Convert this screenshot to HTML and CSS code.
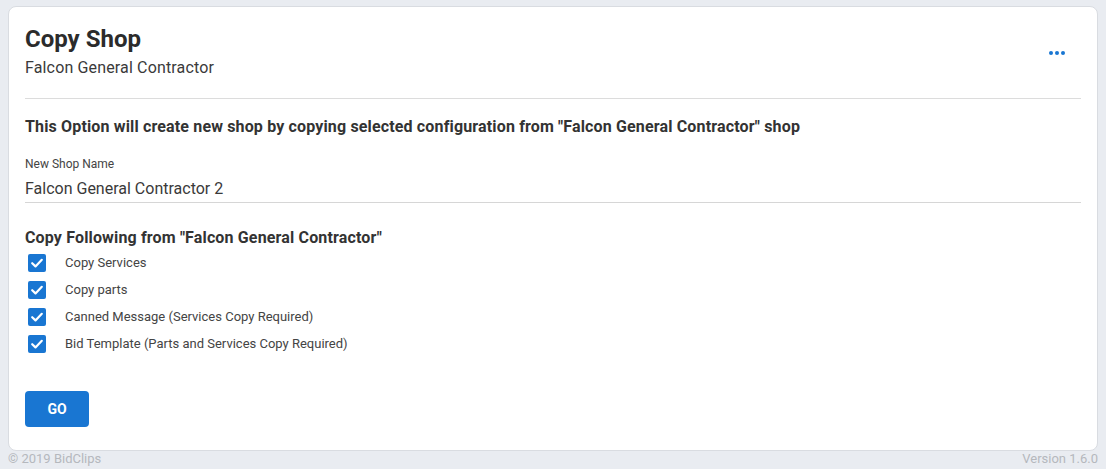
FILE: index.html
```html
<!DOCTYPE html>
<html>
<head>
<meta charset="utf-8">
<link rel="stylesheet" href="styles.css">
</head>
<body>
<div class="page">
  <div class="card">
    <div class="header">
      <div class="titles">
        <h1 class="title">Copy Shop</h1>
        <div class="subtitle">Falcon General Contractor</div>
      </div>
      <div class="more" aria-label="more">
        <span class="dot"></span><span class="dot"></span><span class="dot"></span>
      </div>
    </div>
    <div class="divider"></div>
    <p class="intro">This Option will create new shop by copying selected configuration from "Falcon General Contractor" shop</p>
    <div class="field">
      <label class="field-label">New Shop Name</label>
      <div class="field-value">Falcon General Contractor 2</div>
    </div>
    <h2 class="section">Copy Following from "Falcon General Contractor"</h2>
    <ul class="checks">
      <li class="check"><span class="box"><svg viewBox="0 0 18 18" width="18" height="18"><path d="M4.2 9.2 L7.5 12.4 L13.8 5.8" fill="none" stroke="#fff" stroke-width="2.2" stroke-linecap="round" stroke-linejoin="round"/></svg></span><span class="check-label">Copy Services</span></li>
      <li class="check"><span class="box"><svg viewBox="0 0 18 18" width="18" height="18"><path d="M4.2 9.2 L7.5 12.4 L13.8 5.8" fill="none" stroke="#fff" stroke-width="2.2" stroke-linecap="round" stroke-linejoin="round"/></svg></span><span class="check-label">Copy parts</span></li>
      <li class="check"><span class="box"><svg viewBox="0 0 18 18" width="18" height="18"><path d="M4.2 9.2 L7.5 12.4 L13.8 5.8" fill="none" stroke="#fff" stroke-width="2.2" stroke-linecap="round" stroke-linejoin="round"/></svg></span><span class="check-label">Canned Message (Services Copy Required)</span></li>
      <li class="check"><span class="box"><svg viewBox="0 0 18 18" width="18" height="18"><path d="M4.2 9.2 L7.5 12.4 L13.8 5.8" fill="none" stroke="#fff" stroke-width="2.2" stroke-linecap="round" stroke-linejoin="round"/></svg></span><span class="check-label">Bid Template (Parts and Services Copy Required)</span></li>
    </ul>
    <button class="go">GO</button>
  </div>
  <div class="footer">
    <span>© 2019 BidClips</span>
    <span>Version 1.6.0</span>
  </div>
</div>
</body>
</html>
```
FILE: styles.css
```css
* { box-sizing: border-box; }
html, body { margin: 0; padding: 0; }
body {
  background: #e9ecf1;
  font-family: Roboto, "Liberation Sans", Arial, sans-serif;
  color: #333;
}
.page {
  padding: 6px 8px 0 8px;
  width: 1106px;
  height: 469px;
}
.card {
  background: #fff;
  border: 1px solid #d9dce1;
  border-radius: 8px;
  height: 445px;
  padding: 18px 16px 0 16px;
}
.header {
  display: flex;
  justify-content: space-between;
  align-items: flex-start;
}
.title {
  margin: 0;
  font-size: 24px;
  font-weight: 700;
  line-height: 28px;
  color: #2b2b2b;
}
.subtitle {
  margin-top: 5px;
  font-size: 16px;
  line-height: 20px;
  letter-spacing: 0.15px;
  color: #3a3a3a;
}
.more {
  display: flex;
  gap: 2px;
  margin-top: 26px;
  margin-right: 16px;
}
.dot {
  width: 4px;
  height: 4px;
  border-radius: 50%;
  background: #1976d2;
}
.divider {
  height: 1px;
  background: #dcdcdc;
  margin-top: 20px;
}
.intro {
  margin: 18px 0 0 0;
  font-size: 16px;
  font-weight: 700;
  line-height: 20px;
  letter-spacing: 0.15px;
  color: #333;
}
.field {
  margin-top: 20px;
  border-bottom: 1px solid #d6d6d6;
  padding-bottom: 3px;
}
.field-label {
  display: block;
  font-size: 12px;
  line-height: 14px;
  color: #444;
}
.field-value {
  margin-top: 8px;
  font-size: 16px;
  line-height: 20px;
  color: #3a3a3a;
}
.section {
  margin: 25px 0 0 0;
  font-size: 16px;
  font-weight: 700;
  line-height: 20px;
  letter-spacing: 0.15px;
  color: #333;
}
.checks {
  list-style: none;
  margin: 1px 0 0 0;
  padding: 0 0 0 3px;
}
.check {
  display: flex;
  align-items: center;
  height: 27px;
}
.box {
  width: 18px;
  height: 18px;
  border-radius: 2px;
  background: #1976d2;
  display: flex;
}
.check-label {
  margin-left: 19px;
  font-size: 13px;
  color: #444;
}
.go {
  margin-top: 34px;
  width: 64px;
  height: 36px;
  border: none;
  border-radius: 4px;
  background: #1976d2;
  color: #fff;
  font-family: Roboto, "Liberation Sans", Arial, sans-serif;
  font-weight: 700;
  font-size: 14px;
  padding: 0;
}
.footer {
  display: flex;
  justify-content: space-between;
  font-size: 13px;
  line-height: 16px;
  color: #b5b8bd;
}
```
